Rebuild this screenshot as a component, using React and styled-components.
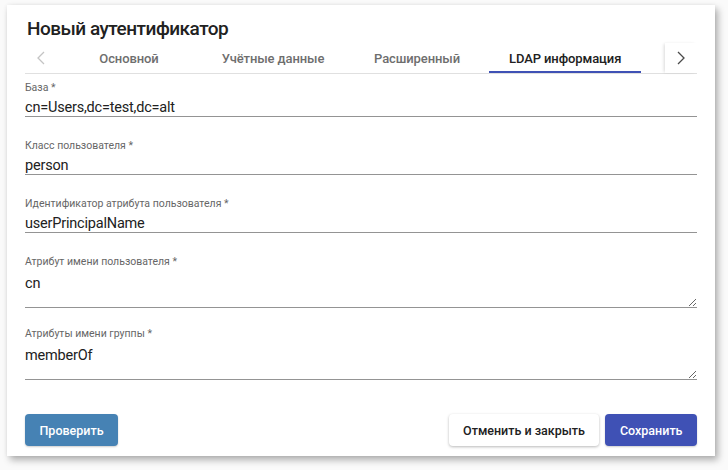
import React from 'react';
import styled, { createGlobalStyle } from 'styled-components';

const GlobalStyle = createGlobalStyle`
  html, body {
    margin: 0;
    background: #fafafa;
    font-family: Roboto, "Noto Sans", sans-serif;
  }
`;

const tabs = ['Основной', 'Учётные данные', 'Расширенный', 'LDAP информация'];

const fields = [
  { label: 'База *', value: 'cn=Users,dc=test,dc=alt' },
  { label: 'Класс пользователя *', value: 'person' },
  { label: 'Идентификатор атрибута пользователя *', value: 'userPrincipalName' },
  { label: 'Атрибут имени пользователя *', value: 'cn', multiline: true },
  { label: 'Атрибуты имени группы *', value: 'memberOf', multiline: true },
];

const Chevron = ({ dir, color }) => (
  <svg width="8" height="14" viewBox="0 0 8 14">
    <polyline
      points={dir === 'left' ? '7,1 1,7 7,13' : '1,1 7,7 1,13'}
      fill="none"
      stroke={color}
      strokeWidth="1.3"
    />
  </svg>
);

export default function App() {
  return (
    <>
      <GlobalStyle />
      <Page>
        <Dialog>
          <Title>Новый аутентификатор</Title>
          <TabBar>
            <ScrollButton>
              <Chevron dir="left" color="#c4c4c4" />
            </ScrollButton>
            <TabList>
              {tabs.map((t, i) => (
                <Tab key={t} $active={i === tabs.length - 1}>{t}</Tab>
              ))}
            </TabList>
            <ScrollButton $right>
              <Chevron dir="right" color="#4a4a4a" />
            </ScrollButton>
          </TabBar>
          <Form>
            {fields.map((f) => (
              <Field key={f.label} $multiline={f.multiline}>
                <Label>{f.label}</Label>
                {f.multiline ? (
                  <TextArea defaultValue={f.value} />
                ) : (
                  <Input defaultValue={f.value} />
                )}
              </Field>
            ))}
          </Form>
          <Actions>
            <Button $kind="test">Проверить</Button>
            <Spacer />
            <Button $kind="plain">Отменить и закрыть</Button>
            <Button $kind="primary">Сохранить</Button>
          </Actions>
        </Dialog>
      </Page>
    </>
  );
}

const Page = styled.div`
  padding: 5px 13px 14px 7px;
`;

const Dialog = styled.div`
  background: #fff;
  padding: 12px 18px 10px;
  box-shadow: 3px 4px 7px rgba(0, 0, 0, 0.3), 0 0 4px rgba(0, 0, 0, 0.06);
`;

const Title = styled.h2`
  margin: 0 0 2px 2px;
  font-size: 19px;
  letter-spacing: -0.5px;
  line-height: 24px;
  font-weight: 500;
  color: #212121;
`;

const TabBar = styled.div`
  display: flex;
  height: 30px;
  border-bottom: 1px solid #e0e0e0;
`;

const ScrollButton = styled.div`
  width: 32px;
  display: flex;
  align-items: center;
  justify-content: center;
  flex-shrink: 0;
  ${(p) => p.$right && `
    margin-left: auto;
    box-shadow: -2px 0 3px -1px rgba(0, 0, 0, 0.15);
  `}
`;

const TabList = styled.div`
  display: flex;
`;

const Tab = styled.div`
  position: relative;
  min-width: 144px;
  padding: 0 20px;
  box-sizing: border-box;
  display: flex;
  align-items: center;
  justify-content: center;
  font-size: 13px;
  letter-spacing: -0.1px;
  font-weight: 500;
  color: ${(p) => (p.$active ? '#212121' : '#6e6e6e')};
  white-space: nowrap;
  ${(p) => p.$active && `
    &::after {
      content: '';
      position: absolute;
      left: 0;
      right: 0;
      bottom: 0;
      height: 2px;
      background: #3f51b5;
    }
  `}
`;

const Form = styled.div`
  display: flex;
  flex-direction: column;
  padding-top: 7px;
`;

const Field = styled.div`
  display: flex;
  flex-direction: column;
  margin-bottom: ${(p) => (p.$multiline ? '19px' : '22px')};
`;

const Label = styled.div`
  font-size: 10.5px;
  line-height: 14px;
  color: #666;
  margin-bottom: 1px;
`;

const Input = styled.input`
  border: none;
  border-bottom: 1px solid #949494;
  padding: 2px 0 0;
  height: 21px;
  box-sizing: border-box;
  font-family: Roboto, sans-serif;
  font-size: 14.5px;
  letter-spacing: -0.2px;
  color: #212121;
  outline: none;
  background: transparent;
`;

const TextArea = styled.textarea`
  border: none;
  border-bottom: 1px solid #949494;
  padding: 4px 0 0;
  height: 38px;
  box-sizing: border-box;
  font-family: Roboto, sans-serif;
  font-size: 14.5px;
  letter-spacing: -0.2px;
  line-height: 20px;
  color: #212121;
  outline: none;
  resize: vertical;
  background: transparent;
  overflow: hidden;
`;

const Actions = styled.div`
  display: flex;
  gap: 6px;
  margin-top: 15px;
`;

const Spacer = styled.div`
  flex: 1;
`;

const buttonColors = {
  test: { bg: '#4682b4', fg: '#fff', shadow: '0 1px 2px rgba(0,0,0,0.2)' },
  plain: { bg: '#fff', fg: '#212121', shadow: '0 1px 3px rgba(0,0,0,0.28)' },
  primary: { bg: '#3f51b5', fg: '#fff', shadow: '0 1px 2px rgba(0,0,0,0.2)' },
};

const Button = styled.button`
  height: 32px;
  padding: 0 14.5px;
  border: none;
  border-radius: 4px;
  font-family: Roboto, sans-serif;
  font-size: 12.5px;
  font-weight: 500;
  background: ${(p) => buttonColors[p.$kind].bg};
  color: ${(p) => buttonColors[p.$kind].fg};
  box-shadow: ${(p) => buttonColors[p.$kind].shadow};
  cursor: pointer;
`;
